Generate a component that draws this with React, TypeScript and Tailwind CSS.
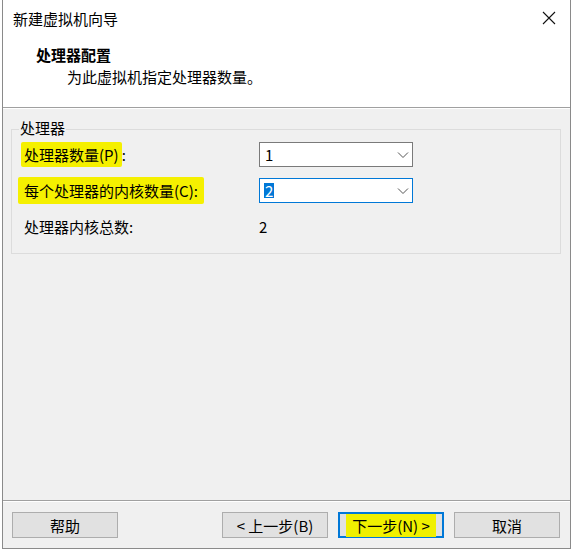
import React from "react";

const font = { fontFamily: '"Noto Sans CJK SC", "Liberation Sans", sans-serif' };

function Chevron() {
  return (
    <svg width="12" height="8" viewBox="0 0 12 8" className="shrink-0">
      <path d="M1 1.5 L6 6.5 L11 1.5" fill="none" stroke="#555" strokeWidth="1" />
    </svg>
  );
}

export default function App() {
  return (
    <div
      className="w-[573px] h-[550px] bg-white text-[15px] leading-none text-black overflow-hidden"
      style={font}
    >
      <div className="ml-[2px] w-[569px] h-[549px] border-l border-r border-b border-[#8a8a8a] flex flex-col bg-[#f0f0f0]">
        {/* title bar */}
        <div className="h-[36px] bg-white flex items-center justify-between pl-[10px] pr-[14px]">
          <span className="text-[15px]">新建虚拟机向导</span>
          <svg width="14" height="14" viewBox="0 0 14 14">
            <path d="M1 1 L13 13 M13 1 L1 13" stroke="#111" strokeWidth="1.1" />
          </svg>
        </div>
        {/* header */}
        <div className="h-[71px] bg-white flex flex-col pl-[33px] pt-[11px]">
          <span className="font-bold text-[15px]">处理器配置</span>
          <span className="mt-[7px] pl-[31px] text-[15px]">为此虚拟机指定处理器数量。</span>
        </div>
        <div className="h-px bg-[#a0a0a0]" />
        <div className="h-px bg-white" />
        {/* body */}
        <div className="flex-1 flex flex-col px-[8px] pt-[12px]">
          <div className="relative border border-[#dcdcdc] h-[125px] mt-[8px] w-[550px]">
            <span className="absolute -top-[10px] left-[7px] px-[1px] bg-[#f0f0f0] text-[15px]">处理器</span>
            <div className="flex flex-col pt-[12px]">
              <div className="flex items-center h-[25px]">
                <div className="w-[247px] pl-[12px]">
                  <span className="bg-[#f5f000] px-[3px] py-[2px] -ml-[3px] rounded-[2px]">处理器数量(P)</span>:
                </div>
                <div className="w-[154px] h-[25px] bg-white border border-[#7a7a7a] flex items-center justify-between pl-[5px] pr-[3px]">
                  <span>1</span>
                  <Chevron />
                </div>
              </div>
              <div className="flex items-center h-[25px] mt-[11px]">
                <div className="w-[247px] pl-[12px]">
                  <span className="bg-[#f5f000] px-[6px] py-[3px] -ml-[6px] rounded-[2px]">每个处理器的内核数量(C):</span>
                </div>
                <div className="w-[154px] h-[25px] bg-white border border-[#0078d7] flex items-center justify-between pl-[4px] pr-[3px]">
                  <span className="bg-[#0078d7] text-white px-[1px]">2</span>
                  <Chevron />
                </div>
              </div>
              <div className="flex items-center h-[25px] mt-[11px]">
                <div className="w-[247px] pl-[12px]">处理器内核总数:</div>
                <span>2</span>
              </div>
            </div>
          </div>
        </div>
        {/* footer */}
        <div className="h-px bg-[#a0a0a0]" />
        <div className="h-px bg-white" />
        <div className="h-[46px] flex items-start pt-[10px] pl-[9px]">
          <button className="w-[106px] h-[26px] bg-[#e1e1e1] border border-[#adadad] text-[15px]">帮助</button>
          <button className="ml-[104px] w-[106px] h-[26px] bg-[#e1e1e1] border border-[#adadad] text-[15px]">&lt; 上一步(B)</button>
          <button className="ml-[10px] w-[106px] h-[26px] bg-[#e1e1e1] border-2 border-[#0078d7] text-[15px] flex items-center justify-center">
            <span className="bg-[#f0f000] px-[6px] py-[4px]">下一步(N) &gt;</span>
          </button>
          <button className="ml-[10px] w-[106px] h-[26px] bg-[#e1e1e1] border border-[#adadad] text-[15px]">取消</button>
        </div>
      </div>
    </div>
  );
}
